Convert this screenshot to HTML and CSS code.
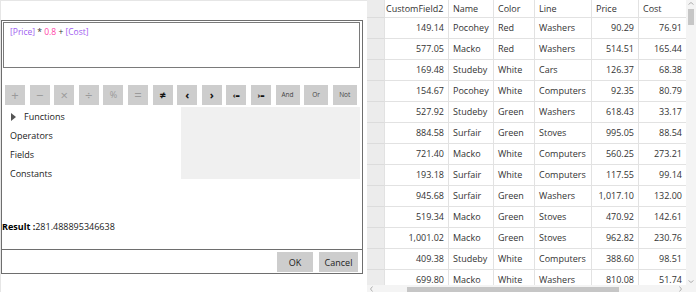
FILE: index.html
```html
<!DOCTYPE html>
<html lang="en">
  <head>
    <meta charset="UTF-8" />
    <title>Expression Editor</title>
    <link rel="stylesheet" href="styles.css">
  </head>
  <body>
    <section class="left">
      <div class="dialog">
        <div class="expr">
          <span class="field">[Price]</span> * <span class="num">0.8</span> + <span class="field">[Cost]</span>
        </div>
        <nav class="ops">
          <button class="op light">+</button>
          <button class="op light">&minus;</button>
          <button class="op light">&times;</button>
          <button class="op light">&divide;</button>
          <button class="op light pct">%</button>
          <button class="op light">=</button>
          <button class="op dark">&ne;</button>
          <button class="op dark">&lsaquo;</button>
          <button class="op dark">&rsaquo;</button>
          <button class="op dark sm">&lsaquo;=</button>
          <button class="op dark sm">&rsaquo;=</button>
          <button class="op word">And</button>
          <button class="op word">Or</button>
          <button class="op word">Not</button>
        </nav>
        <div class="browse">
          <ul class="tree">
            <li><span class="caret"></span>Functions</li>
            <li>Operators</li>
            <li>Fields</li>
            <li>Constants</li>
          </ul>
          <div class="info"></div>
        </div>
        <p class="result"><b>Result :</b>281.488895346638</p>
        <footer>
          <button class="ok">OK</button>
          <button class="cancel">Cancel</button>
        </footer>
      </div>
    </section>

    <section class="grid">
      <div class="table">
        <div class="rh"></div><div class="hd first">CustomField2</div><div class="hd">Name</div><div class="hd">Color</div><div class="hd">Line</div><div class="hd">Price</div><div class="hd">Cost</div>
      </div>
      <div class="hbar">
        <svg class="arr" width="5" height="6" viewBox="0 0 5 6"><polyline points="3.5,0.5 1.5,3 3.5,5.5" fill="none" stroke="#b0b0b0" stroke-width="1"/></svg>
        <span class="thumb"></span>
        <svg class="arr" width="5" height="6" viewBox="0 0 5 6"><polyline points="1.5,0.5 3.5,3 1.5,5.5" fill="none" stroke="#b0b0b0" stroke-width="1"/></svg>
      </div>
      <div class="vbar">
        <svg class="varr" width="6" height="5" viewBox="0 0 6 5"><polyline points="0.5,3.5 3,1.5 5.5,3.5" fill="none" stroke="#b0b0b0" stroke-width="1"/></svg>
        <span class="vthumb"></span>
        <svg class="varr down" width="6" height="5" viewBox="0 0 6 5"><polyline points="0.5,1.5 3,3.5 5.5,1.5" fill="none" stroke="#b0b0b0" stroke-width="1"/></svg>
      </div>
    </section>

    <script>
      const rows = [
        ["149.14", "Pocohey", "Red", "Washers", "90.29", "76.91"],
        ["577.05", "Macko", "Red", "Washers", "514.51", "165.44"],
        ["169.48", "Studeby", "White", "Cars", "126.37", "68.38"],
        ["154.67", "Pocohey", "White", "Computers", "92.35", "80.79"],
        ["527.92", "Studeby", "Green", "Washers", "618.43", "33.17"],
        ["884.58", "Surfair", "Green", "Stoves", "995.05", "88.54"],
        ["721.40", "Macko", "White", "Computers", "560.25", "273.21"],
        ["193.18", "Surfair", "White", "Computers", "117.55", "99.14"],
        ["945.68", "Surfair", "Green", "Washers", "1,017.10", "132.00"],
        ["519.34", "Macko", "Green", "Stoves", "470.92", "142.61"],
        ["1,001.02", "Macko", "Green", "Stoves", "962.82", "230.76"],
        ["409.38", "Studeby", "White", "Computers", "388.60", "98.51"],
        ["699.80", "Macko", "White", "Washers", "810.08", "51.74"],
      ];
      const table = document.querySelector(".table");
      rows.forEach((r) => {
        const rh = document.createElement("div");
        rh.className = "rh";
        table.appendChild(rh);
        r.forEach((v, i) => {
          const c = document.createElement("div");
          c.className = i == 0 || i >= 4 ? "cell n" : "cell";
          c.textContent = v;
          table.appendChild(c);
        });
      });
    </script>
  </body>
</html>
```

FILE: styles.css
```css
* {
  box-sizing: border-box;
}
body {
  margin: 0;
  display: flex;
  width: 696px;
  height: 292px;
  overflow: hidden;
  font-family: "Open Sans", sans-serif;
  font-size: 9px;
  color: #222;
  background: #fff;
}
button {
  font-family: inherit;
  border: none;
  padding: 0;
  cursor: pointer;
}

/* left side: expression dialog */
.left {
  width: 367px;
  flex: none;
  border-top: 1px solid #e6e6e6;
  border-left: 1px solid #e6e6e6;
}
.dialog {
  margin-top: 19px;
  width: 362px;
  height: 254px;
  border: 1px solid #6e6e6e;
  display: flex;
  flex-direction: column;
}
.expr {
  margin: 1px 2px 0 1px;
  height: 46px;
  border: 1px solid #7a7a7a;
  padding: 3px 6px;
  font-size: 8.5px;
  color: #333;
}
.field {
  color: #a05cf0;
}
.num {
  color: #ff3fa8;
}
.ops {
  display: flex;
  gap: 4.6px;
  margin-top: 17px;
  padding-left: 3px;
}
.op {
  width: 20px;
  height: 20px;
  background: #cdcdcd;
  font-size: 13px;
  line-height: 20px;
  text-align: center;
}
.op.light {
  color: #9a9a9a;
}
.op.pct {
  font-size: 9px;
}
.op.dark {
  color: #111;
  font-weight: bold;
  font-size: 11px;
}
.op.sm {
  font-size: 7.5px;
}
.op.word {
  width: 24px;
  font-size: 6.5px;
  color: #444;
}
.browse {
  display: flex;
  margin-top: 2px;
}
.tree {
  list-style: none;
  margin: 0;
  padding: 0 0 0 8px;
  flex: 1;
  line-height: 19px;
}
.caret {
  display: inline-block;
  width: 0;
  height: 0;
  border-left: 5px solid #555;
  border-top: 4px solid transparent;
  border-bottom: 4px solid transparent;
  margin: 0 8px 0 1px;
  vertical-align: -1px;
}
.info {
  width: 179px;
  height: 72px;
  margin-right: 2px;
  background: #f0f0f0;
}
.result {
  margin: 0;
  margin-top: auto;
  line-height: 16px;
  padding-bottom: 14px;
}
.result b {
  color: #000;
}
footer {
  border-top: 1px solid #6e6e6e;
  height: 24px;
  display: flex;
  justify-content: flex-end;
  gap: 6px;
  padding: 2px 4px 0 0;
}
footer button {
  height: 20px;
  background: #cdcdcd;
  font-size: 9px;
  color: #222;
}
.ok {
  width: 36px;
}
.cancel {
  width: 39px;
}

/* right side: data grid */
.grid {
  flex: 1;
  position: relative;
  overflow: hidden;
  color: #333;
}
.table {
  display: grid;
  grid-template-columns: 18px 64px 45px 41px 57px 47px 48px;
  grid-auto-rows: 21px;
  grid-template-rows: 18px;
}
.table > div {
  border-right: 1px solid #e2e2e2;
  border-bottom: 1px solid #e2e2e2;
  line-height: 20px;
  padding: 0 4px;
  white-space: nowrap;
  overflow: hidden;
}
.table .rh {
  background: #ececec;
  border-bottom-color: #dcdcdc;
}
.table .hd {
  line-height: 17px;
}
.table .hd.first {
  padding-left: 1px;
}
.table .n {
  text-align: right;
}
.hbar {
  position: absolute;
  left: 0;
  right: 10px;
  bottom: 0;
  height: 7px;
  background: #f4f4f4;
  display: flex;
  align-items: center;
}
.hbar .arr:first-child {
  margin-left: 2px;
}
.thumb {
  margin-left: 33px;
  width: 212px;
  height: 5px;
  align-self: flex-end;
  background: #c6c6c6;
  margin-right: auto;
}
.hbar .arr:last-child {
  margin-right: 3px;
}
.vbar {
  position: absolute;
  top: 0;
  right: 0;
  width: 10px;
  bottom: 0;
  background: #f4f4f4;
  display: flex;
  flex-direction: column;
  align-items: center;
}
.varr {
  margin-top: 1px;
}
.vthumb {
  width: 6px;
  height: 16px;
  background: #c6c6c6;
  margin-top: 3px;
  margin-bottom: auto;
}
.varr.down {
  margin-bottom: 8px;
}
```
